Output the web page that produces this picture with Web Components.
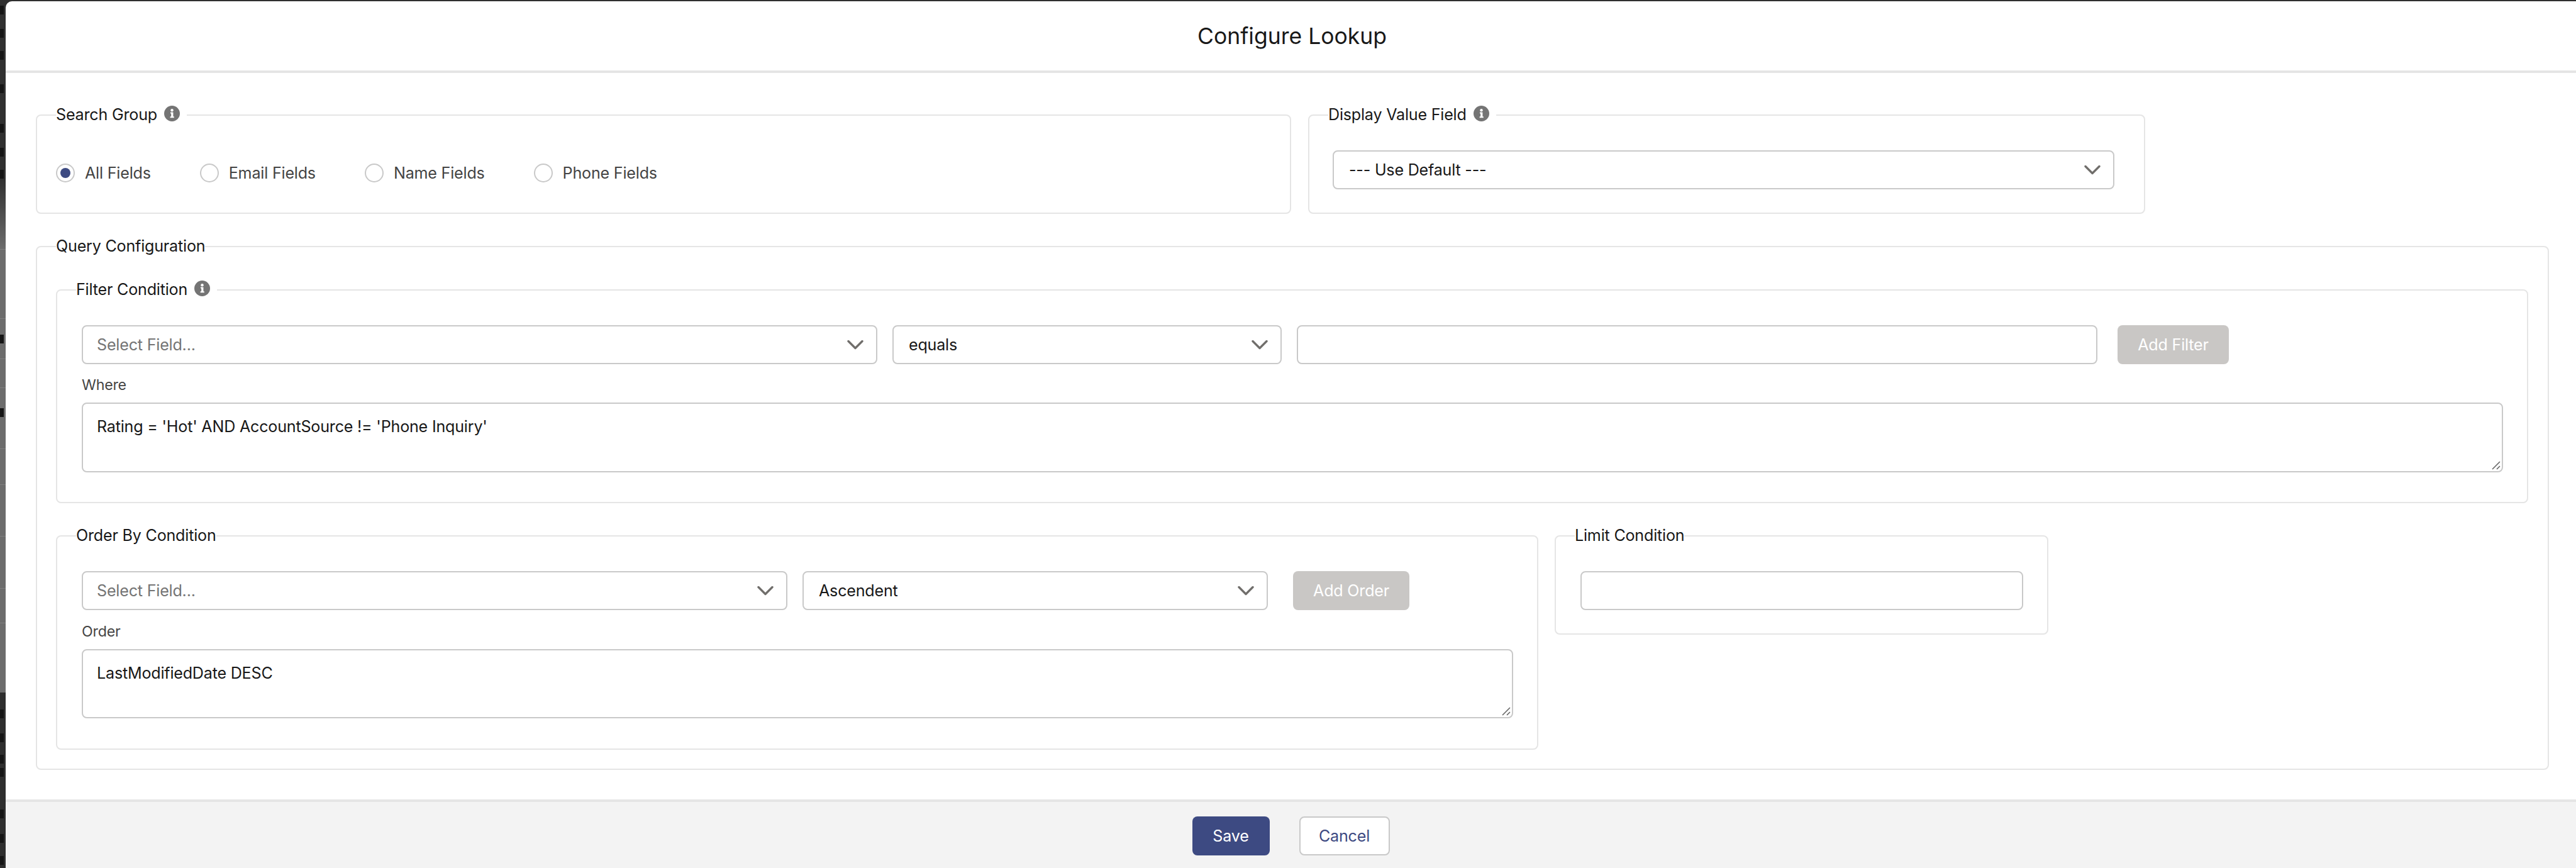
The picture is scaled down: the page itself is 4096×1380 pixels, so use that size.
<!doctype html>
<html lang="en">
<head>
<meta charset="utf-8">
<title>Configure Lookup</title>
<style>
html, body { margin: 0; height: 100%; overflow: hidden; }
body { font-family: Inter, "Liberation Sans", sans-serif; font-size: 25px; letter-spacing: -.2px; color: #181818; background: #303030; }
</style>
</head>
<body>
<lookup-page>
  <lookup-modal heading="Configure Lookup">
    <div style="display:flex;gap:27px">
      <lookup-fieldset legend="Search Group" info style="width:1996px" pad="62px 30px 0">
        <div style="display:flex;gap:78px">
          <lookup-radio checked>All Fields</lookup-radio>
          <lookup-radio>Email Fields</lookup-radio>
          <lookup-radio>Name Fields</lookup-radio>
          <lookup-radio>Phone Fields</lookup-radio>
        </div>
      </lookup-fieldset>
      <lookup-fieldset legend="Display Value Field" info style="width:1331px" pad="41px 47px 37px 37px">
        <lookup-select>--- Use Default ---</lookup-select>
      </lookup-fieldset>
    </div>

    <lookup-fieldset legend="Query Configuration" style="margin-top:37px" pad="39px 31px 30px 30px">
      <lookup-fieldset legend="Filter Condition" info pad="41px 38px 47px 39px">
        <div style="display:flex;gap:24px">
          <lookup-select placeholder style="width:1265px">Select Field...</lookup-select>
          <lookup-select style="width:619px">equals</lookup-select>
          <lookup-input style="width:1273px"></lookup-input>
          <lookup-button disabled style="width:177px;margin-left:8px">Add Filter</lookup-button>
        </div>
        <lookup-textarea label="Where" style="margin-top:19px;--h:111px">Rating = 'Hot' AND AccountSource != 'Phone Inquiry'</lookup-textarea>
      </lookup-fieldset>

      <div style="display:flex;gap:26px;align-items:flex-start;margin-top:37px">
        <lookup-fieldset legend="Order By Condition" style="width:2357px" pad="41px 38px 48px 39px">
          <div style="display:flex;gap:24px">
            <lookup-select placeholder style="width:1122px">Select Field...</lookup-select>
            <lookup-select style="width:740px">Ascendent</lookup-select>
            <lookup-button disabled style="width:185px;margin-left:16px">Add Order</lookup-button>
          </div>
          <lookup-textarea label="Order" style="margin-top:20px;--h:110px">LastModifiedDate DESC</lookup-textarea>
        </lookup-fieldset>
        <lookup-fieldset legend="Limit Condition" style="width:785px" pad="41px 38px 37px 39px">
          <lookup-input></lookup-input>
        </lookup-fieldset>
      </div>
    </lookup-fieldset>

    <lookup-button slot="footer" variant="brand" style="width:123px">Save</lookup-button>
    <lookup-button slot="footer" variant="neutral" style="width:144px">Cancel</lookup-button>
  </lookup-modal>
</lookup-page>

<script>
// what is left of the page behind the modal: a 9px strip on the left
const pageTpl = document.createElement('template');
const stripMarks = [9,23,21,39,49,24,21,248,103,465,24,20,7,52,25,21];
const stripLines = [396,506,570,616,713,770,852,935,990];
pageTpl.innerHTML = `
<style>
:host { display: flex; height: 100vh; padding-top: 2px; box-sizing: border-box; }
.strip {
  flex: 0 0 9px; margin-top: -2px; overflow: hidden; display: flex; flex-direction: column;
  background: linear-gradient(to bottom, #303030 0 284px,
    ${stripLines.map(y=>`#6c6c6c ${y}px, #808080 ${y}px ${y+1}px, #6c6c6c ${y+1}px`).join(', ')},
    #6c6c6c 1101px, #2e2e2e 1101px);
}
.strip i { display: block; flex: none; height: 14px; width: 6px; background: #151515; }
::slotted(lookup-modal) { flex: 1; min-width: 0; }
</style>
<div class="strip" aria-hidden="true">${stripMarks.map(m=>`<i style="margin-top:${m}px"></i>`).join('')}</div>
<slot></slot>`;

class LookupPage extends HTMLElement {
  constructor(){
    super();
    this.attachShadow({mode:'open'}).appendChild(pageTpl.content.cloneNode(true));
  }
}

const modalTpl = document.createElement('template');
modalTpl.innerHTML = `
<style>
:host { display: flex; flex-direction: column; background: #fff; border-top-left-radius: 10px; overflow: hidden; }
.header {
  flex: 0 0 114px; box-sizing: border-box; height: 114px; border-bottom: 4px solid #e5e5e5; padding-left: 4px;
  display: flex; align-items: center; justify-content: center;
  font-size: 35.5px; letter-spacing: 0; color: #181818;
}
.body { flex: 1; padding: 52px 43px 0 48px; min-height: 0; }
.footer {
  flex: 0 0 109px; box-sizing: border-box; border-top: 4px solid #e5e5e5; background: #f3f3f3;
  padding-top: 23px; display: flex; justify-content: center; gap: 47px;
}
</style>
<div class="header" id="title"></div>
<div class="body"><slot></slot></div>
<div class="footer"><slot name="footer"></slot></div>`;

class LookupModal extends HTMLElement {
  constructor(){
    super();
    this.attachShadow({mode:'open'}).appendChild(modalTpl.content.cloneNode(true));
    this.shadowRoot.querySelector('#title').textContent = this.getAttribute('heading');
  }
}

const infoIcon = `
<svg class="info" width="25" height="25" viewBox="0 0 26 26" aria-hidden="true">
  <circle cx="13" cy="13" r="13" fill="#747474"/>
  <circle cx="13" cy="7.6" r="2.3" fill="#fff"/>
  <path d="M10.4 11h4.6v7h1.4v2h-6.4v-2h1.6v-5h-1.2z" fill="#fff"/>
</svg>`;

const fieldsetTpl = document.createElement('template');
fieldsetTpl.innerHTML = `
<style>
:host { display: flex; min-width: 0; }
fieldset {
  flex: 1; min-width: 0; margin: 0; padding: 0; box-sizing: border-box;
  border: 2px solid #e5e5e5; border-radius: 8px;
}
legend {
  display: flex; align-items: center; height: 30px; line-height: 30px;
  margin-left: 30px; padding: 0; font-size: 25.1px; color: #181818;
}
legend span { margin-bottom: 2px; }
legend .info { margin: 0 11px 6px 11px; }
</style>
<fieldset>
  <legend></legend>
  <div id="inner"><slot></slot></div>
</fieldset>`;

class LookupFieldset extends HTMLElement {
  constructor(){
    super();
    this.attachShadow({mode:'open'}).appendChild(fieldsetTpl.content.cloneNode(true));
    const lg = this.shadowRoot.querySelector('legend');
    lg.innerHTML = `<span></span>${this.hasAttribute('info') ? infoIcon : ''}`;
    lg.querySelector('span').textContent = this.getAttribute('legend');
    this.shadowRoot.querySelector('#inner').style.padding = this.getAttribute('pad') || '0';
  }
}

const radioTpl = document.createElement('template');
radioTpl.innerHTML = `
<style>
:host { display: inline-flex; align-items: center; gap: 16px; height: 30px; color: #444; font-size: 25.1px; }
.dot {
  box-sizing: border-box; width: 30px; height: 30px; border: 2px solid #c9c9c9; border-radius: 50%;
  background: #fff; display: flex; align-items: center; justify-content: center;
}
.dot i { display: none; width: 16px; height: 16px; border-radius: 50%; background: #3d4a82; }
:host([checked]) .dot i { display: block; }
</style>
<span class="dot"><i></i></span>
<span><slot></slot></span>`;

class LookupRadio extends HTMLElement {
  constructor(){
    super();
    this.attachShadow({mode:'open'}).appendChild(radioTpl.content.cloneNode(true));
  }
}

const selectTpl = document.createElement('template');
selectTpl.innerHTML = `
<style>
:host {
  display: flex; align-items: center; justify-content: space-between; box-sizing: border-box; height: 62px;
  padding: 0 20px 0 24px; border: 2px solid #c9c9c9; border-radius: 8px; background: #fff;
  font-size: 25.1px; color: #181818;
}
:host([placeholder]) { color: #747474; padding-left: 22px; }
svg { display: block; flex: none; }
</style>
<span><slot></slot></span>
<svg width="26" height="16" viewBox="0 0 26 16" aria-hidden="true">
  <path d="M2 2.5 13 13.5 24 2.5" fill="none" stroke="#706e6b" stroke-width="3.4" stroke-linecap="round" stroke-linejoin="round"/>
</svg>`;

class LookupSelect extends HTMLElement {
  constructor(){
    super();
    this.attachShadow({mode:'open'}).appendChild(selectTpl.content.cloneNode(true));
  }
}

const inputTpl = document.createElement('template');
inputTpl.innerHTML = `
<style>
:host { display: block; box-sizing: border-box; height: 62px; border: 2px solid #c9c9c9; border-radius: 8px; background: #fff; }
</style>`;

class LookupInput extends HTMLElement {
  constructor(){
    super();
    this.attachShadow({mode:'open'}).appendChild(inputTpl.content.cloneNode(true));
  }
}

const areaTpl = document.createElement('template');
areaTpl.innerHTML = `
<style>
:host { display: block; }
.label { height: 28px; line-height: 28px; margin-bottom: 14px; font-size: 23.2px; color: #444; }
.box {
  position: relative; box-sizing: border-box; height: var(--h, 110px);
  padding: 22px 22px 0; border: 2px solid #c9c9c9; border-radius: 8px; background: #fff;
  font-size: 25.1px; line-height: 28px; color: #181818;
}
svg { position: absolute; right: 1px; bottom: 1px; }
</style>
<div class="label" id="lbl"></div>
<div class="box">
  <slot></slot>
  <svg width="16" height="16" viewBox="0 0 16 16" aria-hidden="true">
    <path d="M2 14 14 2M9 14 14 9" stroke="#666" stroke-width="1.6" fill="none"/>
  </svg>
</div>`;

class LookupTextarea extends HTMLElement {
  constructor(){
    super();
    this.attachShadow({mode:'open'}).appendChild(areaTpl.content.cloneNode(true));
    this.shadowRoot.querySelector('#lbl').textContent = this.getAttribute('label');
  }
}

const buttonTpl = document.createElement('template');
buttonTpl.innerHTML = `
<style>
:host {
  display: flex; align-items: center; justify-content: center; box-sizing: border-box; height: 62px;
  border-radius: 8px; font-size: 25.1px; white-space: nowrap; flex: none;
}
:host([disabled]) { background: #c9c7c5; color: #fff; }
:host([variant="brand"]) { background: #3d4a82; color: #fff; }
:host([variant="neutral"]) { background: #fff; color: #3d4a82; border: 2px solid #c9c9c9; }
</style>
<slot></slot>`;

class LookupButton extends HTMLElement {
  constructor(){
    super();
    this.attachShadow({mode:'open'}).appendChild(buttonTpl.content.cloneNode(true));
  }
}

customElements.define('lookup-page', LookupPage);
customElements.define('lookup-modal', LookupModal);
customElements.define('lookup-fieldset', LookupFieldset);
customElements.define('lookup-radio', LookupRadio);
customElements.define('lookup-select', LookupSelect);
customElements.define('lookup-input', LookupInput);
customElements.define('lookup-textarea', LookupTextarea);
customElements.define('lookup-button', LookupButton);
</script>
</body>
</html>
